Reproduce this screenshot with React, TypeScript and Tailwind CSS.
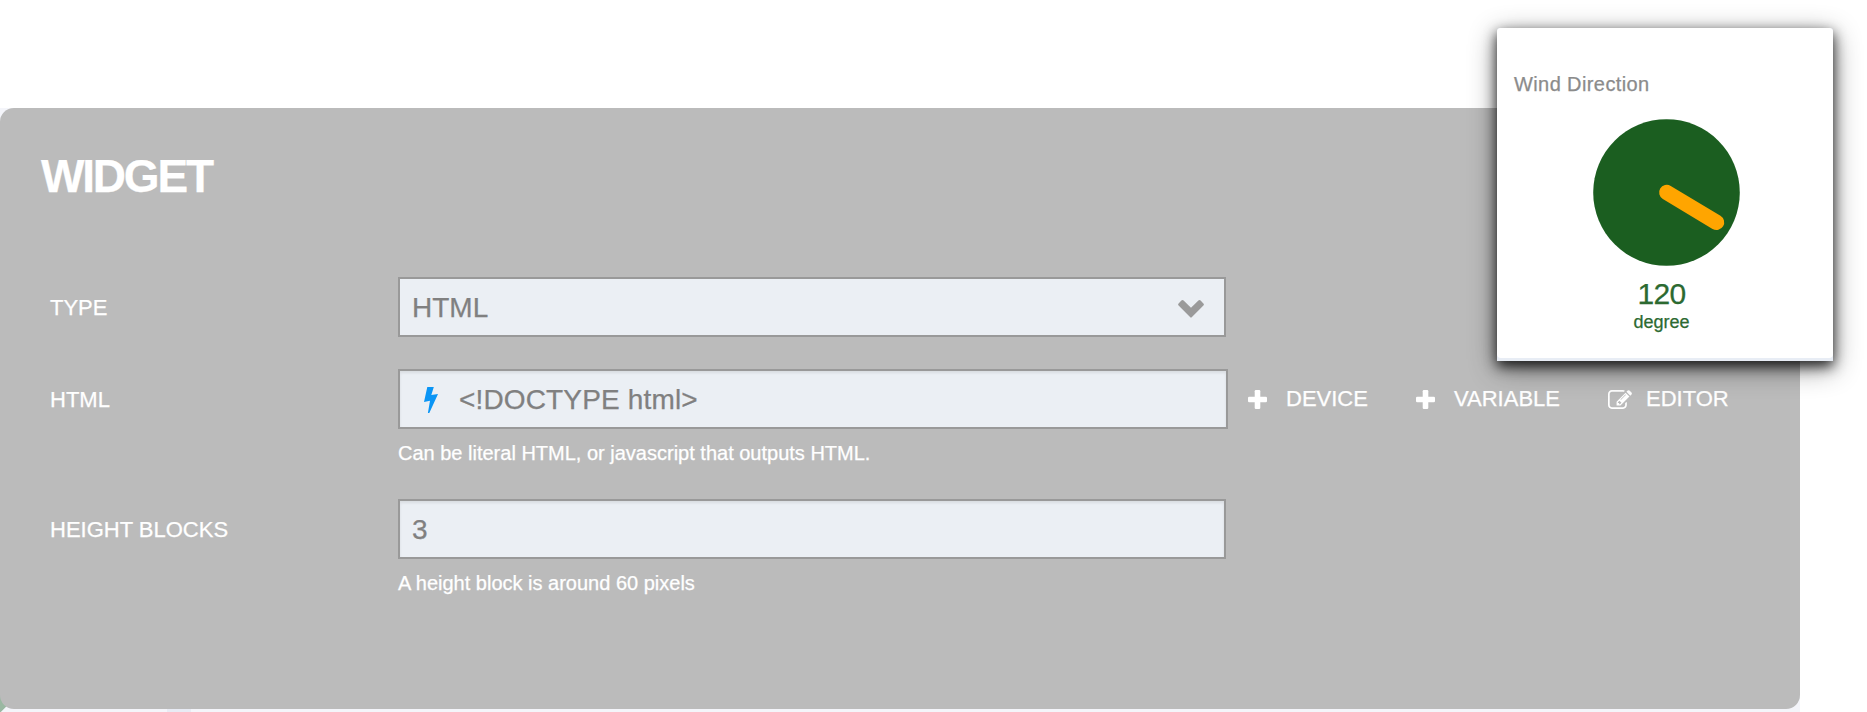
import React from "react";

const Plus = () => (
  <svg className="h-[19px] w-[19px] shrink-0" viewBox="0 0 19 19" fill="white">
    <rect x="6.7" y="0" width="5.6" height="19" rx="1.2" />
    <rect x="0" y="6.7" width="19" height="5.6" rx="1.2" />
  </svg>
);

const Edit = () => (
  <svg className="h-[19px] w-6 shrink-0" viewBox="0 128 1792 1408" fill="white">
    <path d="M888 1184l116-116-152-152-116 116v56h96v96h56zm440-720q-16-16-33 1l-350 350q-17 17-1 33t33-1l350-350q17-17 1-33zm80 594v190q0 119-84.5 203.5t-203.5 84.5h-832q-119 0-203.5-84.5t-84.5-203.5v-832q0-119 84.5-203.5t203.5-84.5h832q63 0 117 25 15 7 18 23 3 17-9 29l-49 49q-14 14-32 8-23-6-45-6h-832q-66 0-113 47t-47 113v832q0 66 47 113t113 47h832q66 0 113-47t47-113v-126q0-13 9-22l64-64q15-15 35-7t20 29zm-96-738l288 288-672 672h-288v-288zm444 132l-92 92-288-288 92-92q28-28 68-28t68 28l152 152q28 28 28 68t-28 68z" />
  </svg>
);

const Bolt = () => (
  <svg className="mt-px h-[26px] w-[14px] shrink-0" viewBox="0 0 14 26" fill="#0a95f5">
    <path d="M3.3 0H9.8L7.3 8L14 7L5.3 26H3.9L6 13.7L0 15Z" />
  </svg>
);

const Chevron = () => (
  <svg className="mt-[3px] h-[18px] w-[26px] shrink-0" viewBox="0 0 26 18" fill="#9a9a9a">
    <path d="M3.4 .6Q4.5-.4 5.6 .6L13 7.8L20.4 .6Q21.5-.4 22.6 .6L25.4 3.4Q26.4 4.5 25.4 5.6L13.7 17.3Q13 18 12.3 17.3L.6 5.6Q-.4 4.5 .6 3.4Z" />
  </svg>
);

const fieldBase =
  "flex h-[60px] items-center border-2 border-[#999] bg-[#ebeff4] text-[28px] leading-none text-[#808080]";
const inset = "shadow-[inset_0_2px_3px_rgba(0,0,0,0.08)]";

function Label({ children }: { children: React.ReactNode }) {
  return (
    <div className="flex h-[60px] w-[348px] shrink-0 items-center pt-px text-[22px] leading-none">
      {children}
    </div>
  );
}

function Action({ icon, gap, children }: { icon: React.ReactNode; gap: string; children: React.ReactNode }) {
  return (
    <div className={"flex items-center " + gap}>
      {icon}
      <span>{children}</span>
    </div>
  );
}

export default function App() {
  return (
    <div className="relative h-[712px] w-[1867px] overflow-hidden bg-white pt-[108px] font-['Liberation_Sans',Arial,sans-serif] text-white [-webkit-text-stroke:0.25px_currentColor]">
      <div className="h-[604px] w-[1800px] bg-[#f4f5fa] bg-[linear-gradient(#e8ebf4,#e8ebf4),linear-gradient(135deg,#9ab8a2_62%,transparent_66%)] bg-[size:24px_3px,10px_24px] bg-[position:167px_601px,0_583px] bg-no-repeat">
        <main className="h-[601px] rounded-[14px] bg-[#bbb] pl-[50px] pt-[45px]">
          <h1 className="-ml-[9px] h-[124px] text-[46px] font-bold leading-[46px] tracking-[-2.2px]">WIDGET</h1>
          <div className="flex">
            <Label>TYPE</Label>
            <div className={fieldBase + " w-[828px] justify-between pl-3 pr-5"}>
              <span className="pt-px">HTML</span>
              <Chevron />
            </div>
          </div>
          <div className="mt-8 flex">
            <Label>HTML</Label>
            <div>
              <div className={fieldBase + " w-[830px] gap-[21px] pl-6 " + inset}>
                <Bolt />
                <span className="pt-px tracking-[0.15px]">&lt;!DOCTYPE html&gt;</span>
              </div>
              <p className="mt-3 h-[58px] text-[20px] leading-6">
                Can be literal HTML, or javascript that outputs HTML.
              </p>
            </div>
            <div className="ml-5 flex h-[60px] items-center text-[22px] leading-none">
              <div className="w-[168px]"><Action icon={<Plus />} gap="gap-[19px]">DEVICE</Action></div>
              <div className="w-[192px]"><Action icon={<Plus />} gap="gap-[19px]">VARIABLE</Action></div>
              <Action icon={<Edit />} gap="gap-[14px]">EDITOR</Action>
            </div>
          </div>
          <div className="flex">
            <Label>HEIGHT BLOCKS</Label>
            <div>
              <div className={fieldBase + " w-[828px] pl-3 " + inset}>
                <span className="pt-px">3</span>
              </div>
              <p className="mt-3 text-[20px] leading-6">A height block is around 60 pixels</p>
            </div>
          </div>
        </main>
      </div>
      <aside className="absolute left-[1497px] top-[28px] h-[333px] w-[336px] rounded-t-[3px] bg-[#e8edf5] shadow-[0_7px_28px_rgba(0,0,0,0.45),0_5px_13px_rgba(0,0,0,0.8)]">
        <div className="flex h-[330px] flex-col rounded-[4px] bg-white pt-[44px]">
          <h2 className="ml-[17px] h-[47px] text-[20px] leading-6 tracking-[0.4px] text-[#8b8b8b]">Wind Direction</h2>
          <svg className="ml-[96px] h-[147px] w-[147px] shrink-0" viewBox="0 0 147 147">
            <circle cx="73.5" cy="73.5" r="73.3" fill="#1b5e20" />
            <path d="M73.8 73.5L123.5 103.3" stroke="orange" strokeWidth="15.4" strokeLinecap="round" />
          </svg>
          <div className="mr-[7px] mt-3 text-center text-[#2c6a31]">
            <div className="text-[30px] leading-8 tracking-[-0.7px]">120</div>
            <div className="text-[18px] leading-6">degree</div>
          </div>
        </div>
      </aside>
    </div>
  );
}
